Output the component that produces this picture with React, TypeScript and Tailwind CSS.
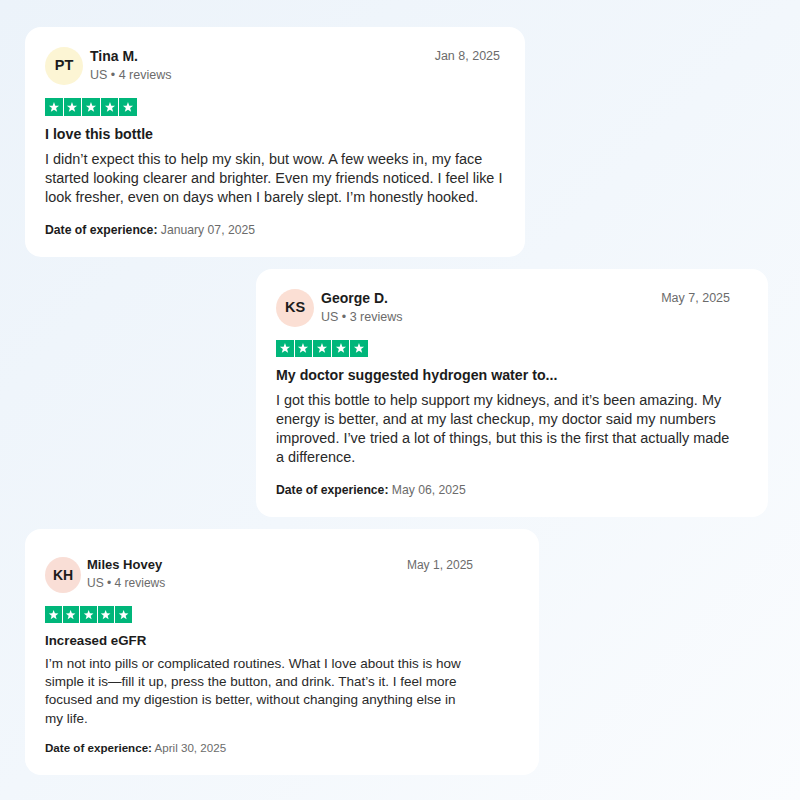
import React from "react";

type Review = {
  initials: string;
  avatarBg: string;
  name: string;
  meta: string;
  date: string;
  title: string;
  body: string;
  experience: string;
};

const reviews: Review[] = [
  {
    initials: "PT",
    avatarBg: "bg-[#fcf5d4]",
    name: "Tina M.",
    meta: "US • 4 reviews",
    date: "Jan 8, 2025",
    title: "I love this bottle",
    body: "I didn’t expect this to help my skin, but wow. A few weeks in, my face started looking clearer and brighter. Even my friends noticed. I feel like I look fresher, even on days when I barely slept. I’m honestly hooked.",
    experience: "January 07, 2025",
  },
  {
    initials: "KS",
    avatarBg: "bg-[#fbdfd4]",
    name: "George D.",
    meta: "US • 3 reviews",
    date: "May 7, 2025",
    title: "My doctor suggested hydrogen water to...",
    body: "I got this bottle to help support my kidneys, and it’s been amazing. My energy is better, and at my last checkup, my doctor said my numbers improved. I’ve tried a lot of things, but this is the first that actually made a difference.",
    experience: "May 06, 2025",
  },
  {
    initials: "KH",
    avatarBg: "bg-[#f9ded6]",
    name: "Miles Hovey",
    meta: "US • 4 reviews",
    date: "May 1, 2025",
    title: "Increased eGFR",
    body: "I’m not into pills or complicated routines. What I love about this is how simple it is—fill it up, press the button, and drink. That’s it. I feel more focused and my digestion is better, without changing anything else in my life.",
    experience: "April 30, 2025",
  },
];

function Star({ size }: { size: number }) {
  return (
    <div
      className="flex items-center justify-center bg-[#00b67a]"
      style={{ width: size, height: size }}
    >
      <svg viewBox="0 0 24 24" width={size * 0.68} height={size * 0.68}>
        <path
          fill="#ffffff"
          d="M12 2.2l2.65 7.1 7.55.3-5.92 4.7 2.05 7.3L12 17.4l-6.33 4.2 2.05-7.3L1.8 9.6l7.55-.3z"
        />
      </svg>
    </div>
  );
}

function Stars({ size, gap }: { size: number; gap: string }) {
  return (
    <div className={`flex ${gap}`}>
      {[0, 1, 2, 3, 4].map((i) => (
        <Star key={i} size={size} />
      ))}
    </div>
  );
}

function LargeCard({
  r,
  className,
  inner,
  dateMr,
}: {
  r: Review;
  className: string;
  inner: string;
  dateMr: string;
}) {
  return (
    <div className={`rounded-[16px] bg-white pl-[20px] pt-[20px] pb-[19px] ${className}`}>
      <div className={inner}>
        <div className="flex items-start">
          <div
            className={`flex h-[38px] w-[38px] shrink-0 items-center justify-center rounded-full ${r.avatarBg} text-[14.5px] font-bold text-[#1c1c1c]`}
          >
            {r.initials}
          </div>
          <div className="ml-[7px] flex flex-col">
            <div className="text-[14px] leading-[19px] font-bold text-[#1c1c1c]">{r.name}</div>
            <div className="text-[12.5px] leading-[19px] text-[#6b6b6b]">{r.meta}</div>
          </div>
          <div className={`ml-auto text-[12.5px] leading-[19px] text-[#6b6b6b] ${dateMr}`}>{r.date}</div>
        </div>
        <div className="mt-[13px]">
          <Stars size={17.6} gap="gap-[1px]" />
        </div>
        <div className="mt-[9px] text-[14.2px] leading-[19px] font-bold text-[#1c1c1c]">{r.title}</div>
        <p className="mt-[6px] text-[14.45px] leading-[19px] text-[#2a2a2a]">{r.body}</p>
        <div className="mt-[15px] text-[12.2px] leading-[16px] text-[#6b6b6b]">
          <span className="font-bold text-[#1c1c1c]">Date of experience:</span> {r.experience}
        </div>
      </div>
    </div>
  );
}

function SmallCard({ r, className }: { r: Review; className: string }) {
  return (
    <div className={`rounded-[16px] bg-white pl-[20px] pt-[28px] pb-[19px] ${className}`}>
      <div className="w-[428px]">
        <div className="flex items-start">
          <div
            className={`flex h-[36px] w-[36px] shrink-0 items-center justify-center rounded-full ${r.avatarBg} text-[14px] font-bold text-[#1c1c1c]`}
          >
            {r.initials}
          </div>
          <div className="ml-[6px] -mt-[1px] flex flex-col">
            <div className="text-[13px] leading-[18px] font-bold text-[#1c1c1c]">{r.name}</div>
            <div className="text-[12px] leading-[18px] text-[#6b6b6b]">{r.meta}</div>
          </div>
          <div className="ml-auto -mt-[1px] text-[12px] leading-[18px] text-[#6b6b6b]">{r.date}</div>
        </div>
        <div className="mt-[13px]">
          <Stars size={16.6} gap="gap-[1px]" />
        </div>
        <div className="mt-[9px] text-[13.3px] leading-[18px] font-bold text-[#1c1c1c]">{r.title}</div>
        <p className="mt-[5px] text-[13.5px] leading-[18.3px] text-[#2a2a2a]">{r.body}</p>
        <div className="mt-[12px] text-[11.6px] leading-[16px] text-[#6b6b6b]">
          <span className="font-bold text-[#1c1c1c]">Date of experience:</span> {r.experience}
        </div>
      </div>
    </div>
  );
}

export default function App() {
  return (
    <div
      className="flex h-[800px] w-[800px] flex-col gap-[12px] overflow-hidden bg-gradient-to-br from-[#ecf3fa] via-[#f2f7fc] to-[#fafcfe] pt-[27px]"
      style={{ fontFamily: '"Liberation Sans", Arial, Helvetica, sans-serif' }}
    >
      <LargeCard r={reviews[0]} className="ml-[25px] w-[500px]" inner="w-[462px]" dateMr="mr-[7px]" />
      <LargeCard r={reviews[1]} className="ml-[256px] w-[512px]" inner="w-[456px]" dateMr="mr-[2px]" />
      <SmallCard r={reviews[2]} className="ml-[25px] w-[514px]" />
    </div>
  );
}
